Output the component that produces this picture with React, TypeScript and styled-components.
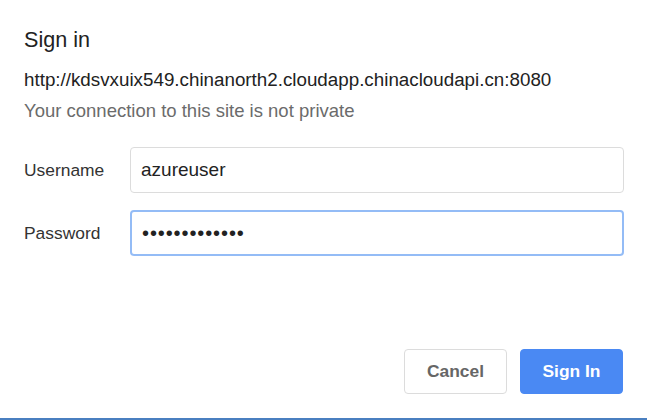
import React from "react";
import styled, { createGlobalStyle } from "styled-components";

const Global = createGlobalStyle`
  html, body { margin: 0; padding: 0; background: #ffffff; }
  body { font-family: "Liberation Sans", Arial, Helvetica, sans-serif; }
  * { box-sizing: border-box; }
`;

const Page = styled.div`
  width: 647px;
  height: 420px;
  display: flex;
  flex-direction: column;
  background: #ffffff;
`;

const Dialog = styled.div`
  flex: 1;
  display: flex;
  flex-direction: column;
  padding: 27px 24px 0 24px;
`;

const Title = styled.h1`
  margin: 0;
  font-size: 21.6px;
  line-height: 26px;
  font-weight: 400;
  color: #222222;
`;

const Origin = styled.div`
  margin-top: 16px;
  font-size: 18.8px;
  line-height: 22px;
  color: #222222;
  white-space: nowrap;
`;

const Note = styled.div`
  margin-top: 9px;
  font-size: 18.5px;
  line-height: 22px;
  color: #6b6b6b;
`;

const Form = styled.div`
  margin-top: 25px;
  display: grid;
  grid-template-columns: 106px 494px;
  row-gap: 17px;
  align-items: center;
`;

const Label = styled.label`
  font-size: 17.4px;
  color: #333333;
`;

const Field = styled.div<{ $focused?: boolean }>`
  height: 46px;
  display: flex;
  align-items: center;
  border-radius: 4px;
  border: ${(p) => (p.$focused ? "2px solid #94bcf6" : "1px solid #dcdcdc")};
  padding-left: 10px;
  font-size: 19px;
  color: #222222;
`;

const Dots = styled.span`
  font-size: 20px;
  letter-spacing: 0.9px;
  color: #222222;
`;

const Actions = styled.div`
  margin-top: auto;
  margin-bottom: 24px;
  display: flex;
  justify-content: flex-end;
  gap: 13px;
`;

const Button = styled.button<{ $primary?: boolean }>`
  width: 103px;
  height: 45px;
  border-radius: 4px;
  font-family: "Liberation Sans", Arial, Helvetica, sans-serif;
  font-size: 17.4px;
  font-weight: 700;
  cursor: pointer;
  border: 1px solid ${(p) => (p.$primary ? "#4a89f3" : "#dcdcdc")};
  background: ${(p) => (p.$primary ? "#4a89f3" : "#ffffff")};
  color: ${(p) => (p.$primary ? "#ffffff" : "#666666")};
`;

const Strip = styled.div`
  height: 2px;
  background: #4a7fc0;
`;

export default function App() {
  return (
    <>
      <Global />
      <Page>
        <Dialog>
          <Title>Sign in</Title>
          <Origin>http://kdsvxuix549.chinanorth2.cloudapp.chinacloudapi.cn:8080</Origin>
          <Note>Your connection to this site is not private</Note>
          <Form>
            <Label>Username</Label>
            <Field>azureuser</Field>
            <Label>Password</Label>
            <Field $focused>
              <Dots>•••••••••••••</Dots>
            </Field>
          </Form>
          <Actions>
            <Button>Cancel</Button>
            <Button $primary>Sign In</Button>
          </Actions>
        </Dialog>
        <Strip />
      </Page>
    </>
  );
}
